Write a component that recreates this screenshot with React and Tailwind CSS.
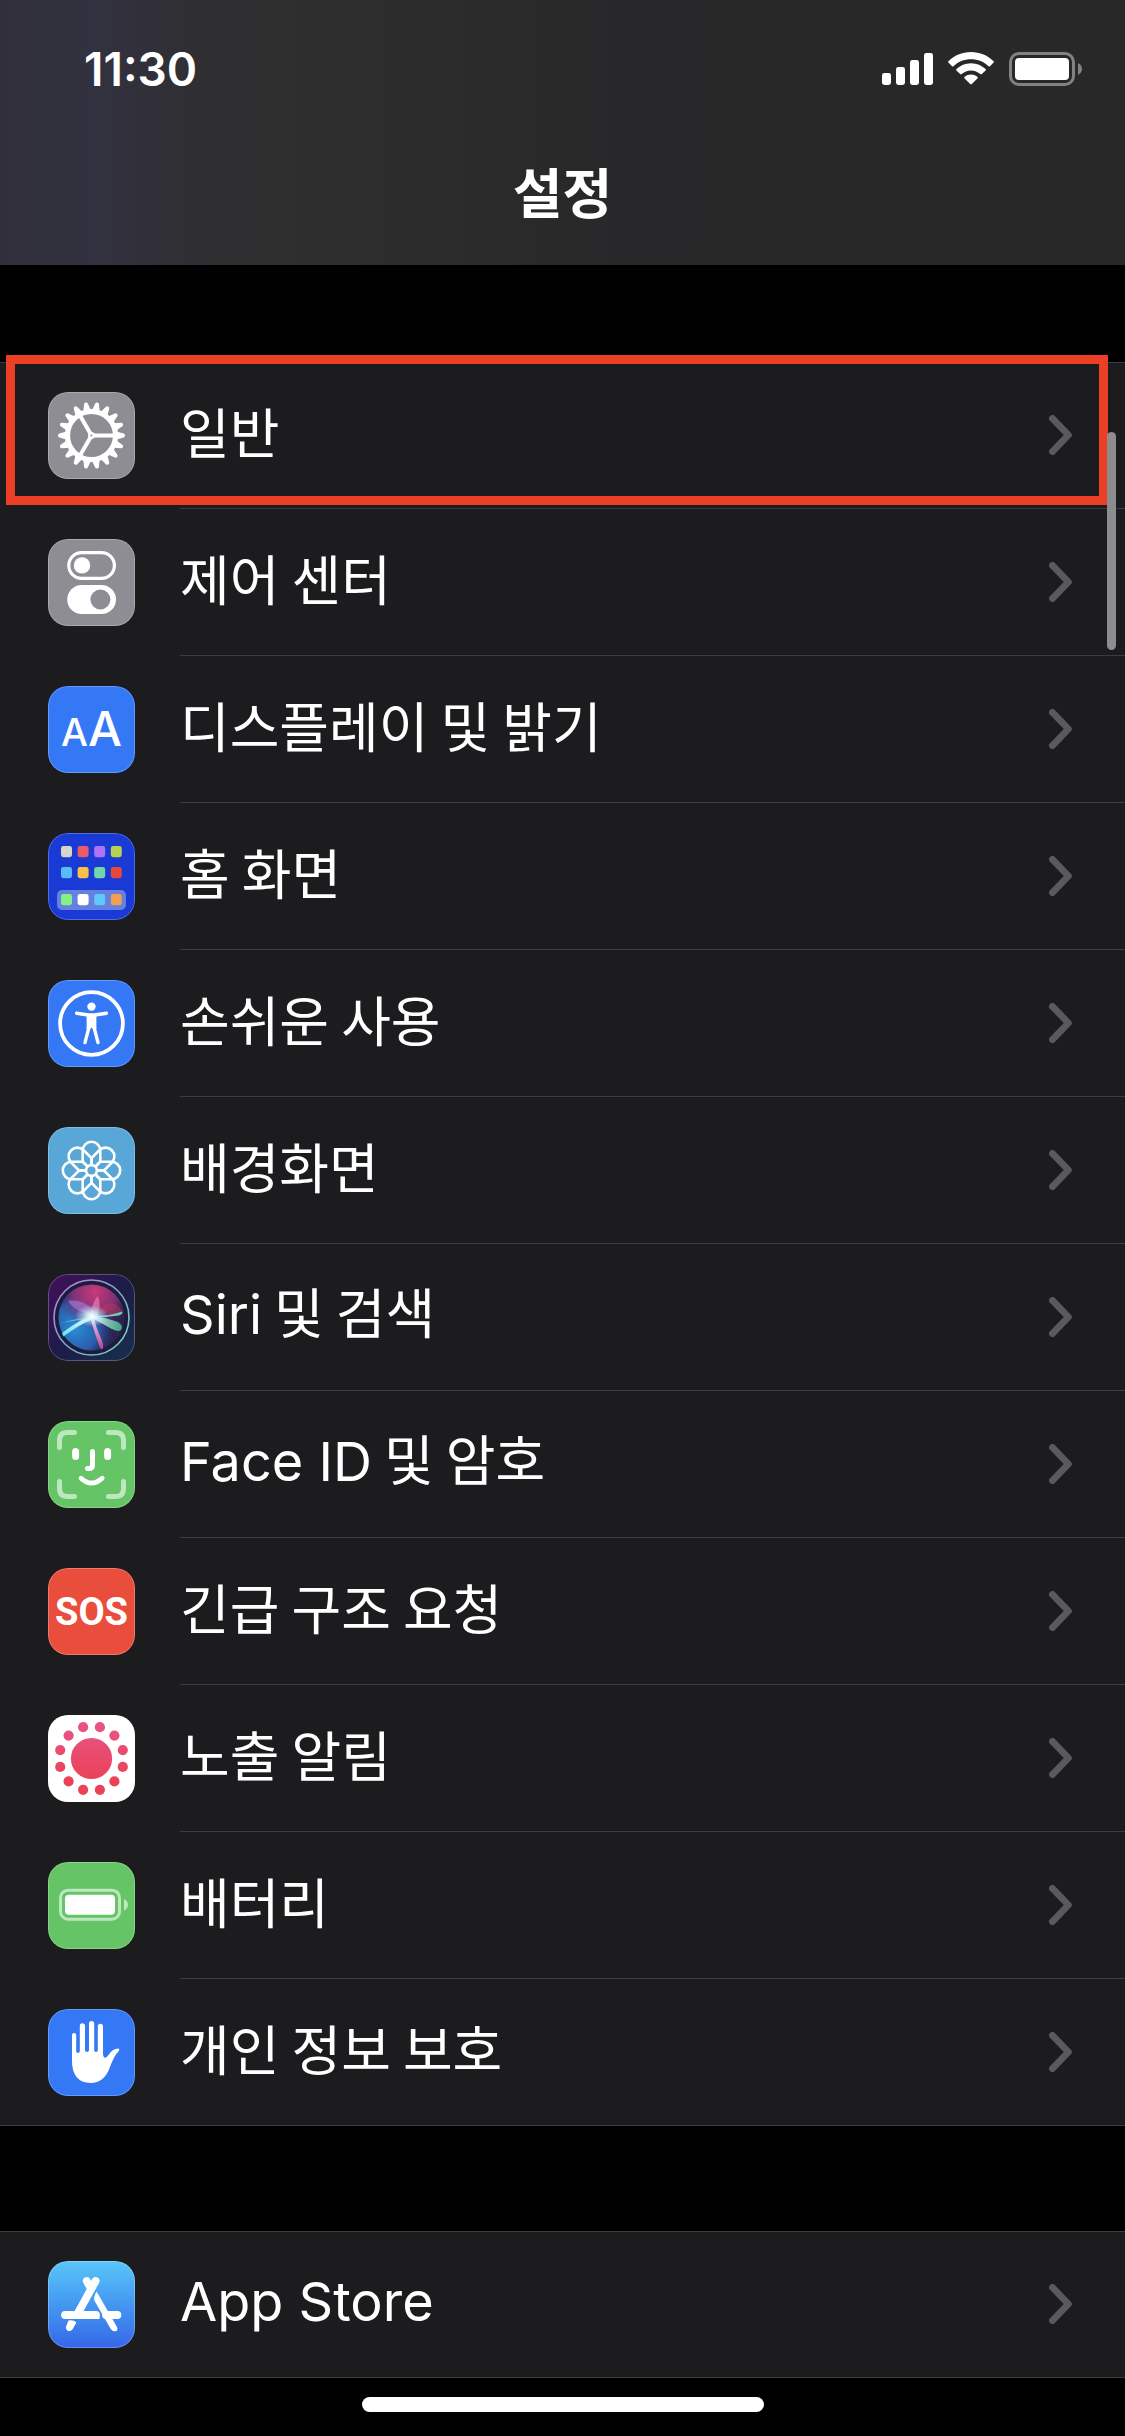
import React from "react";

const range = (n) => Array.from({ length: n }, (_, i) => i);

function Tile({ className = "", children }) {
  return (
    <span
      aria-hidden="true"
      className={`relative my-[30px] block size-[87px] shrink-0 overflow-hidden rounded-[20px] ${className}`}
    >
      {children}
      <span className="absolute inset-0 rounded-[20px] border border-white/25" />
    </span>
  );
}

function Art({ children }) {
  return (
    <svg viewBox="0 0 87 87" className="block size-full" fill="none">
      {children}
    </svg>
  );
}

function GearIcon() {
  return (
    <Tile className="bg-[#8e8d93]">
      <Art>
        <g fill="#fff">
          {range(18).map((i) => (
            <path
              key={i}
              transform={`rotate(${i * 20} 43.5 43.5)`}
              d="M68.5 39.6 L75.6 41.6 Q77 42 77 43.5 Q77 45 75.6 45.4 L68.5 47.4 Z"
            />
          ))}
        </g>
        <circle cx="43.5" cy="43.5" r="24" stroke="#fff" strokeWidth="5.2" />
        <g stroke="#fff" strokeWidth="4">
          {[0, 120, 240].map((a) => (
            <path key={a} transform={`rotate(${a} 43.5 43.5)`} d="M44 43.5H66" />
          ))}
        </g>
        <circle cx="43.5" cy="43.5" r="3.4" fill="#fff" />
        <circle cx="43.3" cy="43.5" r="1" fill="#8e8d93" />
      </Art>
    </Tile>
  );
}

function ControlsIcon() {
  return (
    <Tile className="bg-[#8e8d93]">
      <Art>
        <rect x="20.8" y="13.6" width="45.6" height="25.8" rx="12.9" stroke="#fff" strokeWidth="3.2" />
        <circle cx="34" cy="26.4" r="8.2" fill="#fff" />
        <rect x="19.2" y="46" width="48.8" height="29" rx="14.5" fill="#fff" />
        <circle cx="52.4" cy="60.5" r="10" fill="#8e8d93" />
      </Art>
    </Tile>
  );
}

function DisplayIcon() {
  return (
    <Tile className="bg-[#3478f6]">
      <span className="flex size-full items-baseline justify-center pt-[12px] font-['Inter'] font-medium leading-[62px] text-white">
        <span className="text-[38px]">A</span>
        <span className="text-[48px]">A</span>
      </span>
    </Tile>
  );
}

const homeRows = [
  [13, ["#d6d5c9", "#ea5b67", "#b073f5", "#b9d151"]],
  [34, ["#58bcf7", "#f7c245", "#72d6a8", "#e5493a"]],
  [61, ["#84f184", "#ffffff", "#5ec8fa", "#f09e54"]],
];

function HomeIcon() {
  return (
    <Tile className="bg-[#193ad4]">
      <Art>
        <rect x="9" y="57" width="69" height="20" rx="5" fill="#6680df" />
        {homeRows.map(([y, colors]) =>
          colors.map((c, i) => (
            <rect key={c} x={13 + i * 16.6} y={y} width="11" height="11.2" rx="2.4" fill={c} />
          ))
        )}
      </Art>
    </Tile>
  );
}

function AccessibilityIcon() {
  return (
    <Tile className="bg-[#3478f6]">
      <Art>
        <circle cx="43.5" cy="43.5" r="31.4" stroke="#fff" strokeWidth="3.8" />
        <circle cx="43.5" cy="26.6" r="4.2" fill="#fff" />
        <g stroke="#fff" strokeWidth="3.4" strokeLinecap="round" strokeLinejoin="round">
          <path d="M28.6 33.2 Q36 34.4 40.5 35 H46.5 Q51 34.4 58.4 33.2" />
          <path d="M40.8 48 L37 62.6 M46.2 48 L50 62.6" />
        </g>
        <path d="M38.6 34 H48.4 V49 L46 50 L43.5 47.4 L41 50 L38.6 49 Z" fill="#fff" />
      </Art>
    </Tile>
  );
}

function WallpaperIcon() {
  return (
    <Tile className="bg-[#59a7d7]">
      <Art>
        <g stroke="#fff" strokeWidth="2.6" strokeLinejoin="round">
          {range(8).map((i) => (
            <path
              key={i}
              transform={`rotate(${i * 45} 43.5 43.5)`}
              d="M43.5 43.5 L34.7 34.7 V23.6 A8.8 8.8 0 0 1 52.3 23.6 V34.7 Z"
            />
          ))}
          <circle cx="43.5" cy="43.5" r="5.4" fill="#59a7d7" />
        </g>
      </Art>
    </Tile>
  );
}

function SiriIcon() {
  return (
    <Tile className="bg-[#201a45]">
      <Art>
        <defs>
          <linearGradient id="siri-bg" x1="0" y1="0" x2="1" y2="1">
            <stop offset="0" stopColor="#43105a" />
            <stop offset=".5" stopColor="#1c1c48" />
            <stop offset="1" stopColor="#18304c" />
          </linearGradient>
          <linearGradient id="siri-ring" x1="0" y1="0" x2="1" y2="1">
            <stop offset="0" stopColor="#c77bd0" />
            <stop offset=".5" stopColor="#7fa6c8" />
            <stop offset="1" stopColor="#7fd8b8" />
          </linearGradient>
          <radialGradient id="siri-pink" cx=".55" cy=".12" r=".55">
            <stop offset="0" stopColor="#cc3a78" />
            <stop offset=".6" stopColor="#93327c" stopOpacity=".8" />
            <stop offset="1" stopColor="#5a2a78" stopOpacity="0" />
          </radialGradient>
          <radialGradient id="siri-blue" cx=".25" cy=".66" r=".6">
            <stop offset="0" stopColor="#2a8fd8" />
            <stop offset=".6" stopColor="#2a68ba" stopOpacity=".85" />
            <stop offset="1" stopColor="#203a78" stopOpacity="0" />
          </radialGradient>
          <radialGradient id="siri-glow">
            <stop offset="0" stopColor="#fff" />
            <stop offset=".3" stopColor="#d8fbff" stopOpacity=".85" />
            <stop offset="1" stopColor="#9fe8ff" stopOpacity="0" />
          </radialGradient>
          <linearGradient id="siri-ray-l" x1="1" y1="0" x2="0" y2="1">
            <stop offset="0" stopColor="#fff" />
            <stop offset="1" stopColor="#5fe0f0" />
          </linearGradient>
          <linearGradient id="siri-ray-d" x1="0" y1="0" x2="0" y2="1">
            <stop offset="0" stopColor="#ffe6ff" />
            <stop offset="1" stopColor="#d0408f" />
          </linearGradient>
          <linearGradient id="siri-ray-r" x1="0" y1="0" x2="1" y2="0">
            <stop offset="0" stopColor="#e6fff8" />
            <stop offset="1" stopColor="#3fb98a" />
          </linearGradient>
        </defs>
        <rect width="87" height="87" fill="url(#siri-bg)" />
        <circle cx="43.5" cy="43.5" r="37.5" fill="#1a1d40" stroke="url(#siri-ring)" strokeWidth="1.6" />
        <circle cx="43.5" cy="43.5" r="33" fill="#2b2450" />
        <circle cx="43.5" cy="43.5" r="33" fill="url(#siri-blue)" />
        <circle cx="43.5" cy="43.5" r="33" fill="url(#siri-pink)" />
        <path d="M43 42 C36 38 25 36 20 27 C32 25 42 31 46 38 Z" fill="#b48ae8" opacity=".5" />
        <path d="M42 42 C43 34 46 27 49.5 22 C53 29 52 37 48 43 Z" fill="#ff9ad0" opacity=".5" />
        <path d="M50 38 C56 27 66 26 74 36 C75 40 70 40.6 62 40 Z" fill="#c83a56" opacity=".45" />
        <path d="M43 42 Q61 42 74.5 37.5 Q75 41 69 41.8 Q57 43.4 45 43.6 Z" fill="#7ff0cc" opacity=".8" />
        <path d="M44 42 Q60 44 70 48 Q76 52 73 56 Q70 58.6 63 54.6 Q53 49 44 44 Z" fill="url(#siri-ray-r)" opacity=".85" />
        <path d="M42 43 Q45 54 50 68 Q52.6 77 54.6 75 Q56.4 71 51.6 61 Q47 51 46 42 Z" fill="url(#siri-ray-d)" opacity=".9" />
        <path d="M46 41 Q34 44 14 59 L15.4 62.6 Q30 51 46 44.4 Z" fill="url(#siri-ray-l)" />
        <path d="M13 49 Q29 44 44 43 L44 45 Q28 46 13 49 Z" fill="#7fd8ff" opacity=".6" />
        <ellipse cx="43.5" cy="42" rx="17" ry="11" fill="url(#siri-glow)" />
      </Art>
    </Tile>
  );
}

function FaceIcon() {
  return (
    <Tile className="bg-[#65c466]">
      <Art>
        <g stroke="#fff" strokeLinecap="round" strokeLinejoin="round">
          <g strokeWidth="5" opacity=".58">
            <path d="M11.5 26.5 V19.5 Q11.5 11.5 19.5 11.5 H26.5" />
            <path d="M60.5 11.5 H67.5 Q75.5 11.5 75.5 19.5 V26.5" />
            <path d="M11.5 60.5 V67.5 Q11.5 75.5 19.5 75.5 H26.5" />
            <path d="M60.5 75.5 H67.5 Q75.5 75.5 75.5 67.5 V60.5" />
          </g>
          <path d="M27.6 30.4 V35.6 M59.6 30.4 V35.6" strokeWidth="7" />
          <path d="M44.5 30.5 V44 Q44.5 47.6 41 47.6 H39.5" strokeWidth="5" />
          <path d="M33 57.2 Q43.5 67 54.2 57.2" strokeWidth="4.8" />
        </g>
      </Art>
    </Tile>
  );
}

function SosIcon() {
  return (
    <Tile className="bg-[#e94e3d]">
      <span className="flex size-full items-center justify-center font-['Roboto'] text-[38px] font-bold leading-none text-white">
        SOS
      </span>
    </Tile>
  );
}

function ExposureIcon() {
  return (
    <Tile className="bg-white">
      <Art>
        <defs>
          <linearGradient id="exposure" x1="0" y1="6" x2="0" y2="64" gradientUnits="userSpaceOnUse">
            <stop offset="0" stopColor="#e95588" />
            <stop offset="1" stopColor="#ea4359" />
          </linearGradient>
        </defs>
        <g fill="url(#exposure)">
          <circle cx="43.5" cy="43.5" r="20.6" />
          {range(12).map((i) => {
            const a = ((15 + i * 30) * Math.PI) / 180;
            return <circle key={i} cx={43.5 + 32.4 * Math.cos(a)} cy={43.5 + 32.4 * Math.sin(a)} r="5.1" />;
          })}
        </g>
      </Art>
    </Tile>
  );
}

function BatteryIcon() {
  return (
    <Tile className="bg-[#65c466]">
      <Art>
        <rect x="12.5" y="28.2" width="59" height="29" rx="7.5" stroke="#fff" strokeOpacity=".58" strokeWidth="3" />
        <rect x="17" y="32.7" width="50" height="20" rx="4" fill="#fff" />
        <path d="M76 36.7 Q80 39 80 42.7 Q80 46.4 76 48.7 Z" fill="#fff" fillOpacity=".58" />
      </Art>
    </Tile>
  );
}

function HandIcon() {
  return (
    <Tile className="bg-[#3478f6]">
      <Art>
        <path
          fill="#fff"
          d="M24 26 A2.1 2.1 0 0 1 28.2 26 V42 Q28.2 44 30 44 Q31.8 44 31.8 42 V16.8 A2.6 2.6 0 0 1 37 16.8 V41 Q37 43 39 43 Q41 43 41 41 V14.6 A2.6 2.6 0 0 1 46.2 14.6 V41 Q46.2 43 48 43 Q49.8 43 49.8 41 V17.4 A2.6 2.6 0 0 1 55 17.4 V45 Q55.4 49 57.4 48.8 Q58.8 48.6 60 46.6 Q64.6 39.6 70 39.6 Q72.4 40 70.4 42.4 Q66.4 46 62 58 Q56.4 74 42.6 74 Q24 73.4 24 52 Z"
        />
      </Art>
    </Tile>
  );
}

function StoreIcon() {
  return (
    <Tile className="bg-linear-to-b from-[#5ac6f8] to-[#3766e8]">
      <Art>
        <g stroke="#fff" strokeWidth="7.8" strokeLinecap="round">
          <path d="M38.8 20 L42 26" />
          <path d="M47.6 20 L30 52" />
          <path d="M17 54 H48" />
          <path d="M58 54 H69.4" />
        </g>
        <path d="M48.6 30.6 L69 66 Q70.4 69.4 67.6 70.2 Q64.6 70.8 62.8 68 L46.6 40 Q45 36.4 48.6 30.6 Z" fill="#fff" />
        <path d="M47.2 49.8 Q51.4 52.6 51.8 58 H46 Z" fill="#fff" />
        <path d="M20.4 59.6 Q25.4 58.4 28.4 61.4 L24.4 68.4 Q22 71 19.2 69.4 Q17 67.4 18.6 64.2 Z" fill="#fff" />
      </Art>
    </Tile>
  );
}

function Latin({ children }) {
  return <span className="font-['Inter']">{children}</span>;
}

const mainItems = [
  { id: "general", Icon: GearIcon, label: "일반" },
  { id: "control-center", Icon: ControlsIcon, label: "제어 센터" },
  { id: "display", Icon: DisplayIcon, label: "디스플레이 및 밝기" },
  { id: "home-screen", Icon: HomeIcon, label: "홈 화면" },
  { id: "accessibility", Icon: AccessibilityIcon, label: "손쉬운 사용" },
  { id: "wallpaper", Icon: WallpaperIcon, label: "배경화면" },
  { id: "siri", Icon: SiriIcon, label: <><Latin>Siri</Latin> 및 검색</> },
  { id: "face-id", Icon: FaceIcon, label: <><Latin>Face ID</Latin> 및 암호</> },
  { id: "sos", Icon: SosIcon, label: "긴급 구조 요청" },
  { id: "exposure", Icon: ExposureIcon, label: "노출 알림" },
  { id: "battery", Icon: BatteryIcon, label: "배터리" },
  { id: "privacy", Icon: HandIcon, label: "개인 정보 보호" },
];

const storeItems = [{ id: "app-store", Icon: StoreIcon, label: <Latin>App Store</Latin> }];

function SettingsList({ items }) {
  return (
    <ul className="bg-[#1c1c1e] shadow-[inset_0_1px_0_#3d3d41,inset_0_-1px_0_#3d3d41]">
      {items.map(({ id, Icon, label }) => (
        <li key={id} className="group">
          <a href={`#${id}`} className="flex gap-[45px] pl-12">
            <Icon />
            <span className="flex min-w-0 flex-1 items-center justify-between border-b border-[#3d3d41] pr-[53px] group-last:border-transparent">
              <span className="pb-2 text-[54px] leading-[72px]">{label}</span>
              <svg aria-hidden="true" viewBox="0 0 23 40" className="h-10 w-[23px] shrink-0" fill="none">
                <path d="M3.4 3.4 L19.4 20 L3.4 36.6" stroke="#5a5a5e" strokeWidth="6.8" strokeLinecap="round" strokeLinejoin="round" />
              </svg>
            </span>
          </a>
        </li>
      ))}
    </ul>
  );
}

function StatusIcons() {
  return (
    <div className="flex items-end gap-[15px]" aria-hidden="true">
      <svg viewBox="0 0 51 34" className="h-[34px] w-[51px]" fill="#fff">
        <rect x="0" y="21" width="9" height="12" rx="2.4" />
        <rect x="14" y="15" width="9" height="18" rx="2.4" />
        <rect x="28" y="8" width="9" height="25" rx="2.4" />
        <rect x="42" y="1" width="9" height="32" rx="2.4" />
      </svg>
      <svg viewBox="0 0 46 34" className="h-[34px] w-[46px]" fill="#fff">
        <path d="M23 0 C32 0 40 3.6 45.6 9.2 Q46.2 9.9 45.6 10.6 L42 14.2 Q41.3 14.8 40.6 14.2 C36 9.8 29.8 7.2 23 7.2 C16.2 7.2 10 9.8 5.4 14.2 Q4.7 14.8 4 14.2 L.4 10.6 Q-.2 9.9 .4 9.2 C6 3.6 14 0 23 0 Z" />
        <path d="M23 11.2 C28.8 11.2 33.8 13.4 37.6 17 Q38.2 17.7 37.6 18.4 L33.8 22.1 Q33.1 22.7 32.4 22.1 C29.8 19.8 26.6 18.4 23 18.4 C19.4 18.4 16.2 19.8 13.6 22.1 Q12.9 22.7 12.2 22.1 L8.4 18.4 Q7.8 17.7 8.4 17 C12.2 13.4 17.2 11.2 23 11.2 Z" />
        <path d="M23 22.4 Q26.6 22.4 29.4 24.8 Q30.2 25.6 29.4 26.4 L23.8 32 Q23 32.8 22.2 32 L16.6 26.4 Q15.8 25.6 16.6 24.8 Q19.4 22.4 23 22.4 Z" />
      </svg>
      <svg viewBox="0 0 73 34" className="h-[34px] w-[73px]" fill="none">
        <rect x="1.5" y="1.5" width="63" height="31" rx="8.5" stroke="#828284" strokeWidth="3" />
        <rect x="6" y="6" width="54" height="22" rx="4" fill="#fff" />
        <path d="M69 11 Q73 13.2 73 17 Q73 20.8 69 23 Z" fill="#828284" />
      </svg>
    </div>
  );
}

export default function App() {
  return (
    <div className="relative flex min-h-screen flex-col bg-black font-['Noto_Sans_CJK_KR',sans-serif] text-white">
      <header className="bg-[linear-gradient(90deg,#302f3b_0%,#32313f_9%,#2f2f33_17%,#2e2e2e_28%,#2b2b2b_42%,#28282a_55%,#282828_100%)] pb-[38px]">
        <div className="flex items-center justify-between pl-[84px] pr-[43px] pt-[45px]">
          <time className="font-['Inter'] text-[46px] font-semibold leading-[48px]">11:30</time>
          <StatusIcons />
        </div>
        <h1 className="pt-[62px] text-center text-[54px] font-bold leading-[72px]">설정</h1>
      </header>

      <main>
        <section aria-label="기본 설정" className="relative mt-[97px]">
          <SettingsList items={mainItems} />
          <span className="pointer-events-none absolute -top-[7px] left-[6px] right-[17px] h-[150px] border-[9px] border-[#eb4026]" />
          <span className="pointer-events-none absolute right-[9px] top-[70px] h-[218px] w-[9px] rounded-full bg-[#8d8d90]" />
        </section>
        <section aria-label="스토어" className="mt-[105px]">
          <SettingsList items={storeItems} />
        </section>
      </main>

      <footer className="flex justify-center pb-6 pt-[19px]">
        <span className="h-[15px] w-[402px] rounded-full bg-white" />
      </footer>
    </div>
  );
}
